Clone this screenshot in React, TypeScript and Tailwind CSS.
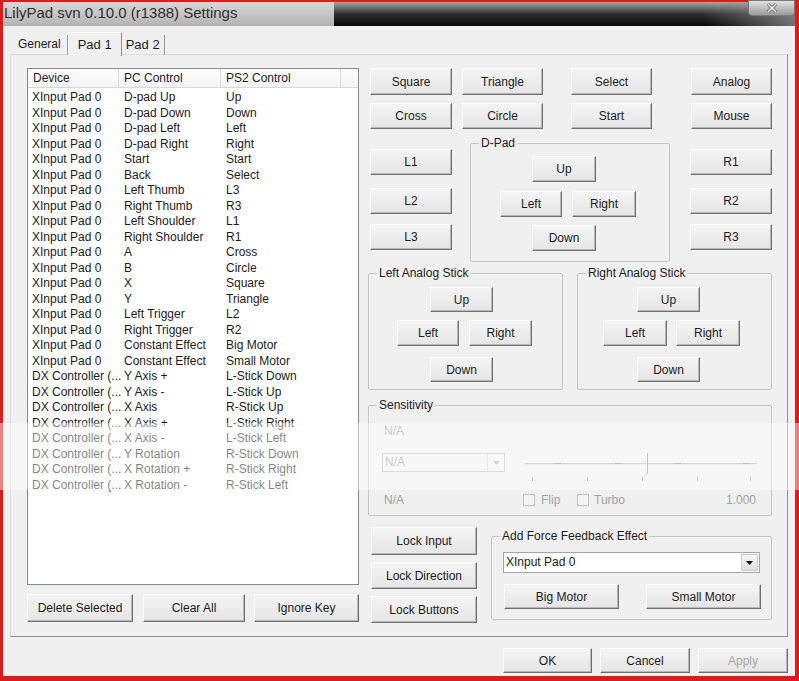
import React from 'react';

const rows: [string, string, string][] = [
  ['XInput Pad 0', 'D-pad Up', 'Up'],
  ['XInput Pad 0', 'D-pad Down', 'Down'],
  ['XInput Pad 0', 'D-pad Left', 'Left'],
  ['XInput Pad 0', 'D-pad Right', 'Right'],
  ['XInput Pad 0', 'Start', 'Start'],
  ['XInput Pad 0', 'Back', 'Select'],
  ['XInput Pad 0', 'Left Thumb', 'L3'],
  ['XInput Pad 0', 'Right Thumb', 'R3'],
  ['XInput Pad 0', 'Left Shoulder', 'L1'],
  ['XInput Pad 0', 'Right Shoulder', 'R1'],
  ['XInput Pad 0', 'A', 'Cross'],
  ['XInput Pad 0', 'B', 'Circle'],
  ['XInput Pad 0', 'X', 'Square'],
  ['XInput Pad 0', 'Y', 'Triangle'],
  ['XInput Pad 0', 'Left Trigger', 'L2'],
  ['XInput Pad 0', 'Right Trigger', 'R2'],
  ['XInput Pad 0', 'Constant Effect', 'Big Motor'],
  ['XInput Pad 0', 'Constant Effect', 'Small Motor'],
  ['DX Controller (...', 'Y Axis +', 'L-Stick Down'],
  ['DX Controller (...', 'Y Axis -', 'L-Stick Up'],
  ['DX Controller (...', 'X Axis', 'R-Stick Up'],
  ['DX Controller (...', 'X Axis +', 'L-Stick Right'],
  ['DX Controller (...', 'X Axis -', 'L-Stick Left'],
  ['DX Controller (...', 'Y Rotation', 'R-Stick Down'],
  ['DX Controller (...', 'X Rotation +', 'R-Stick Right'],
  ['DX Controller (...', 'X Rotation -', 'R-Stick Left'],
];

const Btn = ({ label, className = '', disabled = false }: { label: string; className?: string; disabled?: boolean }) => (
  <div
    className={`flex shrink-0 items-center justify-center bg-[linear-gradient(#f4f4f4,#e5e5e5)] border border-t-[#fafafa] border-l-[#fafafa] border-r-[#707070] border-b-[#707070] shadow-[inset_-1px_-1px_0_#b9b9b9] ${disabled ? 'text-[#a6a6a6]' : 'text-[#1b1b1b]'} ${className}`}
  >
    {label}
  </div>
);

const Group = ({ label, className = '', children }: { label: string; className?: string; children?: React.ReactNode }) => (
  <div className={`relative shrink-0 border border-[#c6c6c6] rounded-[2px] ${className}`}>
    <span className="absolute -top-[8px] left-[8px] bg-[#f0f0f0] px-[2px] leading-[14px] text-[#1b1b1b]">{label}</span>
    {children}
  </div>
);

const Stick = ({ label, right = false }: { label: string; right?: boolean }) => (
  <Group label={label} className="w-[195px] h-[117px]">
    <div className={`flex flex-col pt-[13px] ${right ? 'pl-[59px]' : 'pl-[61px]'}`}>
      <Btn label="Up" className="w-[63px] h-[25px]" />
    </div>
    <div className={`flex mt-[8px] ${right ? 'pl-[25px]' : 'pl-[28px]'}`}>
      <Btn label="Left" className={`${right ? 'w-[64px]' : 'w-[62px]'} h-[26px]`} />
      <Btn label="Right" className={`${right ? 'ml-[9px] w-[64px]' : 'ml-[10px] w-[63px]'} h-[26px]`} />
    </div>
    <div className={`flex mt-[11px] ${right ? 'pl-[59px]' : 'pl-[61px]'}`}>
      <Btn label="Down" className="w-[63px] h-[25px]" />
    </div>
  </Group>
);

const CheckBox = () => <div className="w-[12px] h-[12px] border border-[#c3c3c3] bg-[#f4f4f4] shrink-0" />;

export default function App() {
  return (
    <div className="relative w-[799px] h-[681px] overflow-hidden bg-[#e2191b] pt-[2px] pl-[3px] pr-[4px] pb-[5px] flex flex-col font-['Liberation_Sans',Arial,sans-serif] text-[12px]">
      {/* title bar */}
      <div className="flex h-[24px] shrink-0">
        <div className="w-[331px] bg-[linear-gradient(#d7d7d7,#b3b3b3)] pl-[1px] text-[15px] leading-[22px] text-[#2f2f2f] whitespace-nowrap">
          LilyPad svn 0.10.0 (r1388) Settings
        </div>
        <div className="flex-1 flex justify-end bg-[linear-gradient(to_right,transparent_80%,rgba(150,150,150,0.75)_100%),linear-gradient(#a7a7a7,#303030_50%,#030303)]">
          <div className="-mt-[2px] w-[47px] h-[16px] flex items-center justify-center border border-[#7c7c7c] rounded-b-[4px] bg-[linear-gradient(#e0e0e0,#9c9c9c)]">
            <svg width="12" height="10" viewBox="0 0 12 10">
              <path d="M2 1 L10 9 M10 1 L2 9" stroke="#555" strokeWidth="3" />
              <path d="M2 1 L10 9 M10 1 L2 9" stroke="#f4f4f4" strokeWidth="1.6" />
            </svg>
          </div>
        </div>
      </div>

      {/* body */}
      <div className="flex-1 bg-[#f0f0f0] flex flex-col text-[#1b1b1b]">
        {/* tabs */}
        <div className="flex items-end h-[24px] mt-[5px] ml-[9px] relative z-10">
          <div className="h-[20px] px-[6px] leading-[19px] border-r border-[#9a9a9a]">General</div>
          <div className="h-[24px] -mb-[1px] px-[9px] leading-[24px] bg-[#f0f0f0] border-t border-l border-r border-t-[#ffffff] border-l-[#ffffff] border-r-[#8a8a8a] text-[13px]">Pad 1</div>
          <div className="h-[20px] px-[4px] leading-[19px] border-r border-[#9a9a9a] text-[13px]">Pad 2</div>
        </div>

        {/* panel */}
        <div className="ml-[7px] w-[778px] h-[583px] -mt-[1px] border border-t-[#dadada] border-l-[#dadada] border-r-[#909090] border-b-[#909090] flex pl-[16px] pt-[13px]">
          {/* left column */}
          <div className="w-[332px] flex flex-col shrink-0">
            <div className="h-[517px] border border-[#828790] bg-white overflow-hidden">
              <div className="flex h-[19px] bg-[linear-gradient(#ffffff,#f3f3f3)] border-b border-[#d8d8d8] leading-[18px]">
                <div className="w-[91px] pl-[5px] border-r border-[#dcdcdc]">Device</div>
                <div className="w-[102px] pl-[5px] border-r border-[#dcdcdc]">PC Control</div>
                <div className="w-[120px] pl-[5px] border-r border-[#dcdcdc]">PS2 Control</div>
              </div>
              <div className="pt-[2px]">
                {rows.map((r, i) => (
                  <div key={i} className="grid grid-cols-[91px_102px_120px] leading-[15.5px] whitespace-nowrap">
                    <div className="pl-[4px]">{r[0]}</div>
                    <div className="pl-[5px]">{r[1]}</div>
                    <div className="pl-[5px]">{r[2]}</div>
                  </div>
                ))}
              </div>
            </div>
            <div className="flex mt-[9px]">
              <Btn label="Delete Selected" className="w-[106px] h-[28px]" />
              <Btn label="Clear All" className="ml-[10px] w-[102px] h-[28px]" />
              <Btn label="Ignore Key" className="ml-[9px] w-[105px] h-[28px]" />
            </div>
          </div>

          {/* right column */}
          <div className="ml-[9px] w-[405px] flex flex-col">
            <div className="flex pl-[2px]">
              <Btn label="Square" className="w-[82px] h-[27px]" />
              <Btn label="Triangle" className="ml-[10px] w-[81px] h-[27px]" />
              <Btn label="Select" className="ml-[28px] w-[81px] h-[27px]" />
              <Btn label="Analog" className="ml-[39px] w-[81px] h-[27px]" />
            </div>
            <div className="flex pl-[2px] mt-[8px]">
              <Btn label="Cross" className="w-[82px] h-[26px]" />
              <Btn label="Circle" className="ml-[10px] w-[81px] h-[26px]" />
              <Btn label="Start" className="ml-[28px] w-[81px] h-[26px]" />
              <Btn label="Mouse" className="ml-[39px] w-[81px] h-[26px]" />
            </div>

            <div className="flex mt-[14px] h-[119px]">
              <div className="ml-[2px] w-[82px] flex flex-col pt-[6px]">
                <Btn label="L1" className="w-[82px] h-[26px]" />
                <Btn label="L2" className="mt-[13px] w-[82px] h-[26px]" />
                <Btn label="L3" className="mt-[10px] w-[82px] h-[26px]" />
              </div>
              <Group label="D-Pad" className="ml-[18px] w-[200px] h-[119px]">
                <div className="flex pl-[61px] pt-[12px]">
                  <Btn label="Up" className="w-[64px] h-[26px]" />
                </div>
                <div className="flex pl-[29px] mt-[9px]">
                  <Btn label="Left" className="w-[62px] h-[26px]" />
                  <Btn label="Right" className="ml-[10px] w-[64px] h-[26px]" />
                </div>
                <div className="flex pl-[61px] mt-[8px]">
                  <Btn label="Down" className="w-[64px] h-[26px]" />
                </div>
              </Group>
              <div className="ml-[20px] w-[82px] flex flex-col pt-[6px]">
                <Btn label="R1" className="w-[82px] h-[26px]" />
                <Btn label="R2" className="mt-[13px] w-[82px] h-[26px]" />
                <Btn label="R3" className="mt-[10px] w-[82px] h-[26px]" />
              </div>
            </div>

            <div className="flex mt-[11px]">
              <Stick label="Left Analog Stick" />
              <div className="ml-[14px]">
                <Stick label="Right Analog Stick" right />
              </div>
            </div>

            <Group label="Sensitivity" className="mt-[15px] w-[404px] h-[111px]">
              <div className="text-[#a3a3a3]">
                <div className="pl-[15px] mt-[18px] leading-[14px]">N/A</div>
                <div className="flex mt-[15px] h-[30px] items-start">
                  <div className="ml-[13px] w-[123px] h-[19px] border border-[#bdbdbd] flex bg-[#f0f0f0]">
                    <div className="flex-1 pl-[2px] leading-[17px]">N/A</div>
                    <div className="w-[17px] flex items-center justify-center border-l border-[#d6d6d6]">
                      <svg width="7" height="4" viewBox="0 0 7 4"><path d="M0 0 H7 L3.5 4 Z" fill="#b5b5b5" /></svg>
                    </div>
                  </div>
                  <svg className="ml-[20px]" width="232" height="30" viewBox="0 0 232 30">
                    <line x1="0" y1="10.5" x2="232" y2="10.5" stroke="#b4b4b4" />
                    <line x1="0" y1="11.5" x2="232" y2="11.5" stroke="#e6e6e6" />
                    {[33, 93, 153, 221].map((x) => (
                      <line key={x} x1={x - 3} y1="10.5" x2={x + 3} y2="10.5" stroke="#8a8a8a" />
                    ))}
                    <path d="M122.5 0 V20 L119 24" stroke="#9a9a9a" fill="none" />
                    {[7, 62, 117, 172, 225].map((x) => (
                      <line key={x} x1={x + 0.5} y1="24" x2={x + 0.5} y2="28" stroke="#9a9a9a" />
                    ))}
                  </svg>
                </div>
                <div className="flex items-center mt-[10px] h-[14px] leading-[14px]">
                  <div className="pl-[15px] w-[154px]">N/A</div>
                  <CheckBox />
                  <div className="ml-[6px] w-[36px]">Flip</div>
                  <CheckBox />
                  <div className="ml-[5px]">Turbo</div>
                  <div className="flex-1 text-right pr-[15px]">1.000</div>
                </div>
              </div>
            </Group>

            <div className="flex mt-[11px]">
              <div className="ml-[3px] w-[106px] flex flex-col">
                <Btn label="Lock Input" className="w-[106px] h-[28px]" />
                <Btn label="Lock Direction" className="mt-[7px] w-[106px] h-[27px]" />
                <Btn label="Lock Buttons" className="mt-[7px] w-[106px] h-[27px]" />
              </div>
              <Group label="Add Force Feedback Effect" className="ml-[14px] mt-[9px] w-[281px] h-[84px]">
                <div className="ml-[11px] mt-[15px] w-[257px] h-[21px] border border-[#a5a5a5] bg-white flex">
                  <div className="flex-1 pl-[2px] leading-[19px]">XInput Pad 0</div>
                  <div className="w-[17px] m-[1px] flex items-center justify-center border border-[#c9c9c9] bg-[linear-gradient(#f7f7f7,#dedede)]">
                    <svg width="7" height="4" viewBox="0 0 7 4"><path d="M0 0 H7 L3.5 4 Z" fill="#111" /></svg>
                  </div>
                </div>
                <div className="flex mt-[11px] ml-[12px]">
                  <Btn label="Big Motor" className="w-[115px] h-[25px]" />
                  <Btn label="Small Motor" className="ml-[27px] w-[115px] h-[25px]" />
                </div>
              </Group>
            </div>
          </div>
        </div>

        {/* dialog buttons */}
        <div className="flex justify-end pr-[7px] mt-[11px]">
          <Btn label="OK" className="w-[89px] h-[25px]" />
          <Btn label="Cancel" className="ml-[8px] w-[90px] h-[25px]" />
          <Btn label="Apply" className="ml-[8px] w-[90px] h-[25px]" disabled />
        </div>
      </div>

      {/* light band left by the image host's watermark */}
      <div className="pointer-events-none absolute left-0 top-[423px] w-full h-[67px] bg-white/45" />
    </div>
  );
}
